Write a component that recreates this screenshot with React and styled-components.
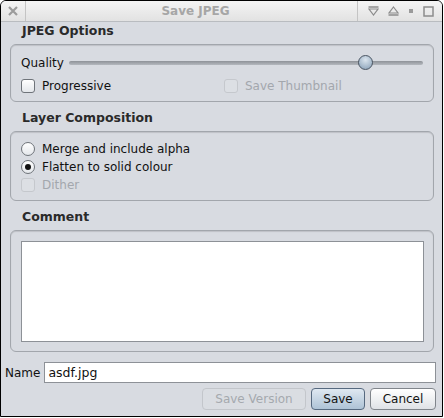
import React from 'react'
import styled, { createGlobalStyle } from 'styled-components'

const GlobalStyle = createGlobalStyle`
  html, body {
    margin: 0;
    padding: 0;
    background: #ffffff;
  }
  body {
    font-family: "DejaVu Sans", "Liberation Sans", sans-serif;
    font-size: 12px;
    color: #111;
  }
`

const Window = styled.div`
  box-sizing: border-box;
  width: 443px;
  height: 417px;
  border: 1px solid #000;
  border-radius: 6px 6px 0 0;
  background: #d8dbe1;
  display: flex;
  flex-direction: column;
  overflow: hidden;
`

const TitleBar = styled.div`
  height: 20px;
  display: flex;
  align-items: stretch;
  background: linear-gradient(#f4f4f4, #e2e2e2);
  border-bottom: 1px solid #b9bcc0;
`

const CloseBox = styled.div`
  width: 24px;
  display: flex;
  align-items: center;
  justify-content: center;
  border-right: 1px solid #c4c4c4;
`

const TitleText = styled.div`
  flex: 1;
  display: flex;
  align-items: center;
  justify-content: center;
  font-weight: bold;
  font-size: 12px;
  color: #a6a6a6;
  border-right: 1px solid #c4c4c4;
  padding-left: 8px;
`

const TitleButtons = styled.div`
  width: 74px;
  display: flex;
  align-items: center;
  justify-content: space-around;
  padding: 0 4px 0 6px;
`

const Content = styled.div`
  flex: 1;
  display: flex;
  flex-direction: column;
  padding: 0 8px 0 9px;
`

const Heading = styled.div`
  height: 22px;
  line-height: 18px;
  padding-left: 12px;
  font-weight: bold;
  font-size: 12.5px;
  color: #2a2a2a;
  margin-top: ${p => (p.first ? '0' : '7px')};
`

const Group = styled.div`
  box-sizing: border-box;
  height: ${p => p.h}px;
  border: 1px solid #a2a6ac;
  border-radius: 6px;
  box-shadow: inset 0 1px 1px rgba(0, 0, 0, 0.12);
  padding: ${p => p.pad || '9px 10px 6px 10px'};
  display: flex;
  flex-direction: column;
  gap: ${p => p.gap || 0}px;
`

const Row = styled.div`
  height: 18px;
  display: flex;
  align-items: center;
`

const TwoCols = styled.div`
  height: 18px;
  display: grid;
  grid-template-columns: 203px 1fr;
  align-items: center;
`

const Option = styled.label`
  display: flex;
  align-items: center;
  gap: 7px;
  color: ${p => (p.disabled ? '#a3a7ad' : '#111')};
`

const Box = styled.span`
  box-sizing: border-box;
  width: 14px;
  height: 14px;
  border-radius: ${p => (p.round ? '50%' : '3px')};
  border: 1px solid ${p => (p.disabled ? '#c5c8cd' : '#6f747a')};
  background: ${p =>
    p.disabled ? '#dcdfe4' : 'linear-gradient(#ffffff, #e4e7eb)'};
  display: flex;
  align-items: center;
  justify-content: center;
  &::after {
    content: '';
    display: ${p => (p.checked ? 'block' : 'none')};
    width: 6px;
    height: 6px;
    border-radius: 50%;
    background: #111;
  }
`

const SliderTrack = styled.div`
  position: relative;
  flex: 1;
  height: 4px;
  margin: 0 0 0 5px;
  border-radius: 2px;
  background: linear-gradient(#8e9298, #b4b8be);
`

const Knob = styled.div`
  position: absolute;
  top: -6px;
  width: 15px;
  height: 15px;
  box-sizing: border-box;
  border-radius: 50%;
  border: 1px solid #4a5562;
  background: radial-gradient(circle at 50% 30%, #dbe5ee, #9fb3c6 70%, #8499ad);
`

const CommentArea = styled.textarea`
  flex: 1;
  resize: none;
  border: 1px solid #8d9197;
  background: #ffffff;
  margin: 0;
  outline: none;
`

const NameRow = styled.div`
  margin-top: 10px;
  height: 21px;
  display: flex;
  align-items: center;
  gap: 4px;
  padding: 0 6px 0 4px;
`

const NameInput = styled.div`
  flex: 1;
  box-sizing: border-box;
  height: 21px;
  border: 1px solid #8d9197;
  background: #fff;
  padding-left: 3px;
  display: flex;
  align-items: center;
  font-size: 12.5px;
`

const ButtonRow = styled.div`
  margin: 5px 0 6px;
  display: flex;
  justify-content: flex-end;
  gap: 5px;
  padding-right: 6px;
`

const Button = styled.button`
  box-sizing: border-box;
  height: 22px;
  width: ${p => p.w}px;
  padding: 0;
  font-family: "DejaVu Sans", "Liberation Sans", sans-serif;
  font-size: 12px;
  border-radius: 4px;
  border: 1px solid ${p => (p.primary ? '#56697f' : p.disabled ? '#c3c6cb' : '#80858b')};
  color: ${p => (p.disabled ? '#a5a9ae' : '#111')};
  background: ${p =>
    p.primary
      ? 'linear-gradient(#dfe8f1, #aec3d6)'
      : p.disabled
      ? '#dadde2'
      : 'linear-gradient(#ffffff, #dfe2e6)'};
`

const CloseIcon = () => (
  <svg width="12" height="12" viewBox="0 0 12 12">
    <path d="M2 2 L10 10 M10 2 L2 10" stroke="#9c9c9c" strokeWidth="2.2" />
  </svg>
)

const ShadeIcon = ({ up }) => (
  <svg width="11" height="10" viewBox="0 0 11 10">
    {up ? (
      <>
        <path d="M5.5 1 L10 7 L1 7 Z" fill="none" stroke="#8c8c8c" strokeWidth="1.2" />
        <path d="M0.5 9 H10.5" stroke="#8c8c8c" strokeWidth="1.4" />
      </>
    ) : (
      <>
        <path d="M0.5 1 H10.5" stroke="#8c8c8c" strokeWidth="1.4" />
        <path d="M1 3 L10 3 L5.5 9 Z" fill="none" stroke="#8c8c8c" strokeWidth="1.2" />
      </>
    )}
  </svg>
)

const MinIcon = () => (
  <svg width="6" height="6" viewBox="0 0 6 6">
    <rect x="1" y="1" width="4" height="4" fill="#9a9a9a" />
  </svg>
)

const MaxIcon = () => (
  <svg width="11" height="11" viewBox="0 0 11 11">
    <rect x="1" y="1" width="9" height="9" fill="none" stroke="#8c8c8c" strokeWidth="1.5" />
  </svg>
)

export default function App() {
  const quality = 84
  return (
    <>
      <GlobalStyle />
      <Window>
        <TitleBar>
          <CloseBox>
            <CloseIcon />
          </CloseBox>
          <TitleText>Save JPEG</TitleText>
          <TitleButtons>
            <ShadeIcon />
            <ShadeIcon up />
            <MinIcon />
            <MaxIcon />
          </TitleButtons>
        </TitleBar>
        <Content>
          <Heading first>JPEG Options</Heading>
          <Group h={58} gap={5}>
            <Row>
              <span>Quality</span>
              <SliderTrack>
                <Knob style={{ left: `calc(${quality}% - 8px)` }} />
              </SliderTrack>
            </Row>
            <TwoCols>
              <Option>
                <Box />
                Progressive
              </Option>
              <Option disabled>
                <Box disabled />
                Save Thumbnail
              </Option>
            </TwoCols>
          </Group>

          <Heading>Layer Composition</Heading>
          <Group h={70} pad="8px 10px 6px 10px">
            <Row>
              <Option>
                <Box round />
                Merge and include alpha
              </Option>
            </Row>
            <Row>
              <Option>
                <Box round checked />
                Flatten to solid colour
              </Option>
            </Row>
            <Row>
              <Option disabled>
                <Box disabled />
                Dither
              </Option>
            </Row>
          </Group>

          <Heading>Comment</Heading>
          <Group h={122} pad="10px 9px 9px 10px">
            <CommentArea />
          </Group>
        </Content>
        <NameRow>
          <span>Name</span>
          <NameInput>asdf.jpg</NameInput>
        </NameRow>
        <ButtonRow>
          <Button w={104} disabled>Save Version</Button>
          <Button w={54} primary>Save</Button>
          <Button w={66}>Cancel</Button>
        </ButtonRow>
      </Window>
    </>
  )
}
